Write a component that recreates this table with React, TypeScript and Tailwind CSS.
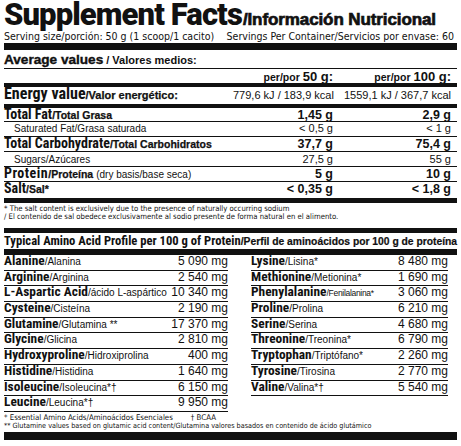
import React from "react";

const NAR = "font-['DejaVu_Sans_Condensed',sans-serif]";
const SANS = "font-['Liberation_Sans',Arial,sans-serif]";
const RC = "font-['Roboto_Condensed',sans-serif] font-bold";

type Amino = { name: string; tr: string; val: string; small?: boolean };

const leftAminos: Amino[] = [
  { name: "Alanine", tr: "/Alanina", val: "5 090 mg" },
  { name: "Arginine", tr: "/Arginina", val: "2 540 mg" },
  { name: "L-Aspartic Acid", tr: "/ácido L-aspártico", val: "10 340 mg" },
  { name: "Cysteine", tr: "/Cisteína", val: "2 190 mg" },
  { name: "Glutamine", tr: "/Glutamina **", val: "17 370 mg" },
  { name: "Glycine", tr: "/Glicina", val: "2 810 mg" },
  { name: "Hydroxyproline", tr: "/Hidroxiprolina", val: "400 mg" },
  { name: "Histidine", tr: "/Histidina", val: "1 640 mg" },
  { name: "Isoleucine", tr: "/Isoleucina*†", val: "6 150 mg" },
  { name: "Leucine", tr: "/Leucina*†", val: "9 950 mg" },
];

const rightAminos: Amino[] = [
  { name: "Lysine", tr: "/Lisina*", val: "8 480 mg" },
  { name: "Methionine", tr: "/Metionina*", val: "1 690 mg" },
  { name: "Phenylalanine", tr: "/Fenilalanina*", val: "3 060 mg", small: true },
  { name: "Proline", tr: "/Prolina", val: "6 210 mg" },
  { name: "Serine", tr: "/Serina", val: "4 680 mg" },
  { name: "Threonine", tr: "/Treonina*", val: "6 790 mg" },
  { name: "Tryptophan", tr: "/Triptófano*", val: "2 260 mg" },
  { name: "Tyrosine", tr: "/Tirosina", val: "2 770 mg" },
  { name: "Valine", tr: "/Valina*†", val: "5 540 mg" },
];

function AminoRow({ a }: { a: Amino }) {
  return (
    <div className="flex items-baseline h-[15.7px] border-b border-[#111] leading-[12px] whitespace-nowrap">
      <span className={`${RC} text-[13.4px]`}>{a.name}</span>
      <span className={`${SANS} ${a.small ? "text-[8.5px] tracking-[-0.3px]" : "text-[10px]"}`}>{a.tr}</span>
      <span className={`${SANS} ml-auto text-[12px]`}>{a.val}</span>
    </div>
  );
}

// main nutrient row: big condensed label + small wide sub label, two value columns
function MainRow({
  main,
  sub,
  extra,
  v1,
  v2,
  className,
}: {
  main: string;
  sub: string;
  extra?: string;
  v1: string;
  v2: string;
  className: string;
}) {
  return (
    <div className={`flex items-baseline leading-[12px] whitespace-nowrap pr-[6px] ${className}`}>
      <div className="flex-1 flex items-baseline">
        <span className={`${RC} text-[14px] ${main === "Protein" ? "tracking-[0.5px]" : ""}`}>{main}</span>
        <span className={`${SANS} font-bold text-[10.5px] [-webkit-text-stroke:0.25px_#111]`}>{sub}</span>
        {extra && <span className={`${SANS} text-[10px] ml-[3px]`}>{extra}</span>}
      </div>
      <div className={`${SANS} font-bold text-[12.5px] w-[100px] text-right`}>{v1}</div>
      <div className={`${SANS} font-bold text-[12.5px] w-[118px] text-right`}>{v2}</div>
    </div>
  );
}

function SubRow({ label, v1, v2, className }: { label: string; v1: string; v2: string; className: string }) {
  return (
    <div className={`flex items-baseline leading-[12px] whitespace-nowrap pr-[6px] ${className}`}>
      <div className={`flex-1 pl-[10px] ${SANS} text-[10px]`}>{label}</div>
      <div className={`${SANS} text-[11px] w-[100px] text-right`}>{v1}</div>
      <div className={`${SANS} text-[11px] w-[118px] text-right`}>{v2}</div>
    </div>
  );
}

export default function App() {
  return (
    <div className="w-[461px] h-[446px] overflow-hidden bg-white text-[#111] px-[4px]">
      {/* Title */}
      <div className="flex items-baseline h-[30px] leading-[30px] whitespace-nowrap">
        <span className="font-['Roboto',sans-serif] font-black text-[31px] tracking-[-0.9px]">Supplement Facts</span>
        <span className={`${SANS} font-bold text-[17px] tracking-[-0.1px] [-webkit-text-stroke:0.7px_#111] ml-[1px]`}>
          /Información Nutricional
        </span>
      </div>
      <div className={`flex justify-between h-[13px] leading-[12px] text-[10.5px] pr-[3px] ${NAR}`}>
        <span>Serving size/porción: 50 g (1 scoop/1 cacito)</span>
        <span>Servings Per Container/Servicios por envase: 60</span>
      </div>
      <div className="h-[7px] bg-[#111]" />

      {/* Average values */}
      <div className="flex items-baseline h-[19px] pt-[4px] border-b border-[#111] leading-[12px] whitespace-nowrap">
        <span className={`${SANS} font-bold text-[13.6px] [-webkit-text-stroke:0.4px_#111]`}>Average values</span>
        <span className={`${SANS} font-bold text-[11px] ml-[3px]`}>/ Valores medios:</span>
      </div>
      <div className="flex items-baseline h-[14px] leading-[12px] whitespace-nowrap pr-[6px]">
        <div className="flex-1" />
        <div className="w-[100px] text-right">
          <span className={`${SANS} font-bold text-[10.5px]`}>per/por </span>
          <span className={`${SANS} font-bold text-[13px]`}>50 g:</span>
        </div>
        <div className="w-[118px] text-right">
          <span className={`${SANS} font-bold text-[10.5px]`}>per/por </span>
          <span className={`${SANS} font-bold text-[13px]`}>100 g:</span>
        </div>
      </div>
      <div className="h-[4px] bg-[#111]" />

      {/* Energy */}
      <div className="flex items-baseline h-[17px] pt-[1px] leading-[12px] whitespace-nowrap pr-[6px]">
        <div className="flex-1 flex items-baseline">
          <span className={`${RC} text-[16px]`}>Energy value</span>
          <span className={`${SANS} font-bold text-[11px] [-webkit-text-stroke:0.25px_#111]`}>/Valor energético:</span>
        </div>
        <div className={`${SANS} text-[11px] w-[100px] text-right`}>779,6 kJ / 183,9 kcal</div>
        <div className={`${SANS} text-[11px] w-[118px] text-right`}>1559,1 kJ / 367,7 kcal</div>
      </div>
      <div className="h-[4px] bg-[#111]" />

      <MainRow main="Total Fat" sub="/Total Grasa" v1="1,45 g" v2="2,9 g" className="h-[14px] border-b border-[#111]" />
      <SubRow label="Saturated Fat/Grasa saturada" v1="< 0,5 g" v2="< 1 g" className="h-[15px] border-b border-[#111]" />
      <MainRow
        main="Total Carbohydrate"
        sub="/Total Carbohidratos"
        v1="37,7 g"
        v2="75,4 g"
        className="h-[15px] border-b border-[#111]"
      />
      <SubRow label="Sugars/Azúcares" v1="27,5 g" v2="55 g" className="h-[15px] pt-[1px] border-b border-[#111]" />
      <MainRow
        main="Protein"
        sub="/Proteína"
        extra="(dry basis/base seca)"
        v1="5 g"
        v2="10 g"
        className="h-[15px] border-b border-[#111]"
      />
      <MainRow main="Salt" sub="/Sal*" v1="< 0,35 g" v2="< 1,8 g" className="h-[16px]" />
      <div className="h-[5px] bg-[#111]" />

      {/* salt footnote */}
      <div className={`h-[25px] pt-[2px] leading-[8px] text-[7.7px] ${NAR}`}>
        <div>* The salt content is exclusively due to the presence of naturally occurring sodium</div>
        <div>/ El contenido de sal obedece exclusivamente al sodio presente de forma natural en el alimento.</div>
      </div>
      <div className="h-[5px] bg-[#111]" />

      {/* Amino header */}
      <div className="flex items-baseline h-[16px] pt-[1.5px] leading-[12px] whitespace-nowrap">
        <span className={`${RC} text-[12.6px]`}>Typical Amino Acid Profile per 100 g of Protein</span>
        <span className={`${SANS} font-bold text-[10.3px] [-webkit-text-stroke:0.2px_#111]`}>
          /Perfil de aminoácidos por 100 g de proteína
        </span>
      </div>
      <div className="h-[6px] bg-[#111]" />

      <div className="grid grid-cols-[226px_1fr]">
        <div className="pr-[2px]">
          {leftAminos.map((a) => (
            <AminoRow key={a.name} a={a} />
          ))}
        </div>
        <div className="pl-[21px] pr-[9px]">
          {rightAminos.map((a) => (
            <AminoRow key={a.name} a={a} />
          ))}
        </div>
      </div>

      {/* amino footnotes */}
      <div className={`h-[20px] pt-[2px] leading-[8px] whitespace-nowrap ${NAR}`}>
        <div className="text-[7.8px]">
          * Essential Amino Acids/Aminoácidos Esenciales<span className="ml-[18px]">† BCAA</span>
        </div>
        <div className="text-[7.2px]">
          ** Glutamine values based on glutamic acid content/Glutamina valores basados en contenido de ácido glutámico
        </div>
      </div>
      <div className="h-[8px] bg-[#111]" />
    </div>
  );
}
